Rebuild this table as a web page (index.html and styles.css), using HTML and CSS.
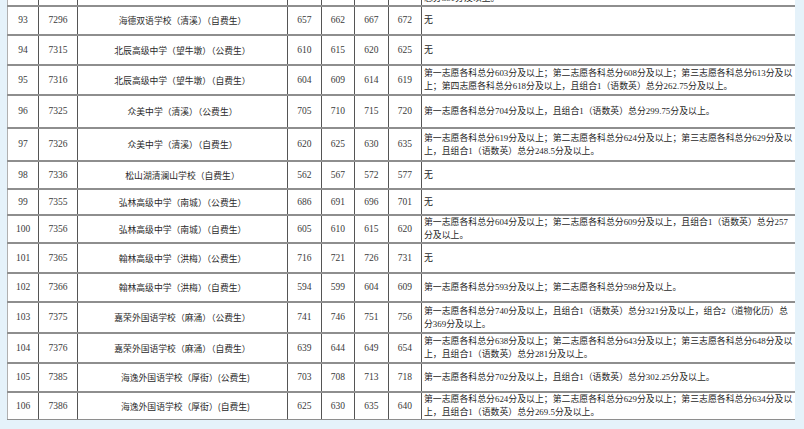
FILE: index.html
```html
<!DOCTYPE html>
<html lang="zh-CN">
<head>
<meta charset="utf-8">
<title>分数线</title>
<link rel="stylesheet" href="styles.css">
</head>
<body>
<div class="sheet">
<table class="grid">
<colgroup>
<col class="c-no"><col class="c-code"><col class="c-name"><col class="c-s"><col class="c-s"><col class="c-s"><col class="c-s"><col class="c-note">
</colgroup>
<tbody>
<tr class="h-prev"><td></td><td></td><td class="name"></td><td></td><td></td><td></td><td></td><td class="note tail">总分351分及以上。</td></tr>
<tr class="h29"><td>93</td><td>7296</td><td class="name">海德双语学校（清溪）（自费生）</td><td>657</td><td>662</td><td>667</td><td>672</td><td class="note">无</td></tr>
<tr class="h30"><td>94</td><td>7315</td><td class="name">北辰高级中学（望牛墩）（公费生）</td><td>610</td><td>615</td><td>620</td><td>625</td><td class="note">无</td></tr>
<tr class="h30"><td>95</td><td>7316</td><td class="name">北辰高级中学（望牛墩）（自费生）</td><td>604</td><td>609</td><td>614</td><td>619</td><td class="note">第一志愿各科总分603分及以上；第二志愿各科总分608分及以上；第三志愿各科总分613分及以<br>上；第四志愿各科总分618分及以上，且组合1（语数英）总分262.75分及以上。</td></tr>
<tr class="h33"><td>96</td><td>7325</td><td class="name">众美中学（清溪）（公费生）</td><td>705</td><td>710</td><td>715</td><td>720</td><td class="note">第一志愿各科总分704分及以上，且组合1（语数英）总分299.75分及以上。</td></tr>
<tr class="h33"><td>97</td><td>7326</td><td class="name">众美中学（清溪）（自费生）</td><td>620</td><td>625</td><td>630</td><td>635</td><td class="note">第一志愿各科总分619分及以上；第二志愿各科总分624分及以上；第三志愿各科总分629分及以<br>上，且组合1（语数英）总分248.5分及以上。</td></tr>
<tr class="h28"><td>98</td><td>7336</td><td class="name">松山湖清澜山学校（自费生）</td><td>562</td><td>567</td><td>572</td><td>577</td><td class="note">无</td></tr>
<tr class="h26"><td>99</td><td>7355</td><td class="name">弘林高级中学（南城）（公费生）</td><td>686</td><td>691</td><td>696</td><td>701</td><td class="note">无</td></tr>
<tr class="h28"><td>100</td><td>7356</td><td class="name">弘林高级中学（南城）（自费生）</td><td>605</td><td>610</td><td>615</td><td>620</td><td class="note">第一志愿各科总分604分及以上；第二志愿各科总分609分及以上，且组合1（语数英）总分257<br>分及以上。</td></tr>
<tr class="h30"><td>101</td><td>7365</td><td class="name">翰林高级中学（洪梅）（公费生）</td><td>716</td><td>721</td><td>726</td><td>731</td><td class="note">无</td></tr>
<tr class="h29"><td>102</td><td>7366</td><td class="name">翰林高级中学（洪梅）（自费生）</td><td>594</td><td>599</td><td>604</td><td>609</td><td class="note">第一志愿各科总分593分及以上；第二志愿各科总分598分及以上。</td></tr>
<tr class="h31"><td>103</td><td>7375</td><td class="name">嘉荣外国语学校（麻涌）（公费生）</td><td>741</td><td>746</td><td>751</td><td>756</td><td class="note">第一志愿各科总分740分及以上，且组合1（语数英）总分321分及以上，组合2（道物化历）总<br>分369分及以上。</td></tr>
<tr class="h30"><td>104</td><td>7376</td><td class="name">嘉荣外国语学校（麻涌）（自费生）</td><td>639</td><td>644</td><td>649</td><td>654</td><td class="note">第一志愿各科总分638分及以上；第二志愿各科总分643分及以上；第三志愿各科总分648分及以<br>上，且组合1（语数英）总分281分及以上。</td></tr>
<tr class="h29"><td>105</td><td>7385</td><td class="name shift">海逸外国语学校（厚街）(公费生)</td><td>703</td><td>708</td><td>713</td><td>718</td><td class="note">第一志愿各科总分702分及以上，且组合1（语数英）总分302.25分及以上。</td></tr>
<tr class="h28"><td>106</td><td>7386</td><td class="name shift">海逸外国语学校（厚街）(自费生)</td><td>625</td><td>630</td><td>635</td><td>640</td><td class="note">第一志愿各科总分624分及以上；第二志愿各科总分629分及以上；第三志愿各科总分634分及以<br>上，且组合1（语数英）总分269.5分及以上。</td></tr>
</tbody>
</table>
</div>
</body>
</html>
```

FILE: styles.css
```css
html, body {
  margin: 0;
  padding: 0;
}
body {
  background: #e5f2fa;
  width: 804px;
  height: 429px;
  overflow: hidden;
}
.sheet {
  padding-left: 7px;
  width: 788px;
  height: 420px;
  overflow: hidden;
}
.grid {
  width: 788px;
  table-layout: fixed;
  border-collapse: collapse;
  background: #fff;
  margin-top: -25px;
  font-family: "Liberation Serif", "Noto Sans CJK SC", serif;
  color: #3a3a3a;
}
.c-no { width: 31px; }
.c-code { width: 39px; }
.c-name { width: 210px; }
.c-s { width: 33.5px; }
.c-note { width: 374px; }
.grid td {
  border-top: 2px solid #8e8e8e;
  border-bottom: 2px solid #8e8e8e;
  border-left: 1.5px solid #555;
  border-right: 1.5px solid #555;
  padding: 0;
  text-align: center;
  vertical-align: middle;
  font-size: 9.5px;
  line-height: 13px;
  white-space: nowrap;
  overflow: visible;
}
.grid td:first-child {
  border-left: 1px solid #b0b0b0;
}
.grid td:last-child {
  border-right: 1px solid #b0b0b0;
}
.grid td.name {
  font-family: "Noto Sans CJK SC", "Liberation Sans", sans-serif;
  font-size: 8.8px;
  color: #2a2a2a;
}
.grid td.name.shift {
  padding-left: 6px;
}
.grid td.note {
  text-align: left;
  padding-left: 2px;
  font-size: 8.9px;
  line-height: 13px;
  color: #1f1f1f;
  font-family: "Liberation Serif", "Noto Sans CJK SC", serif;
}
.grid td.note.tail {
  vertical-align: bottom;
  padding-bottom: 0;
}
.h-prev { height: 30px; }
.h26 { height: 26px; }
.h28 { height: 28px; }
.h29 { height: 29px; }
.h30 { height: 30px; }
.h31 { height: 31px; }
.h33 { height: 33px; }
```
